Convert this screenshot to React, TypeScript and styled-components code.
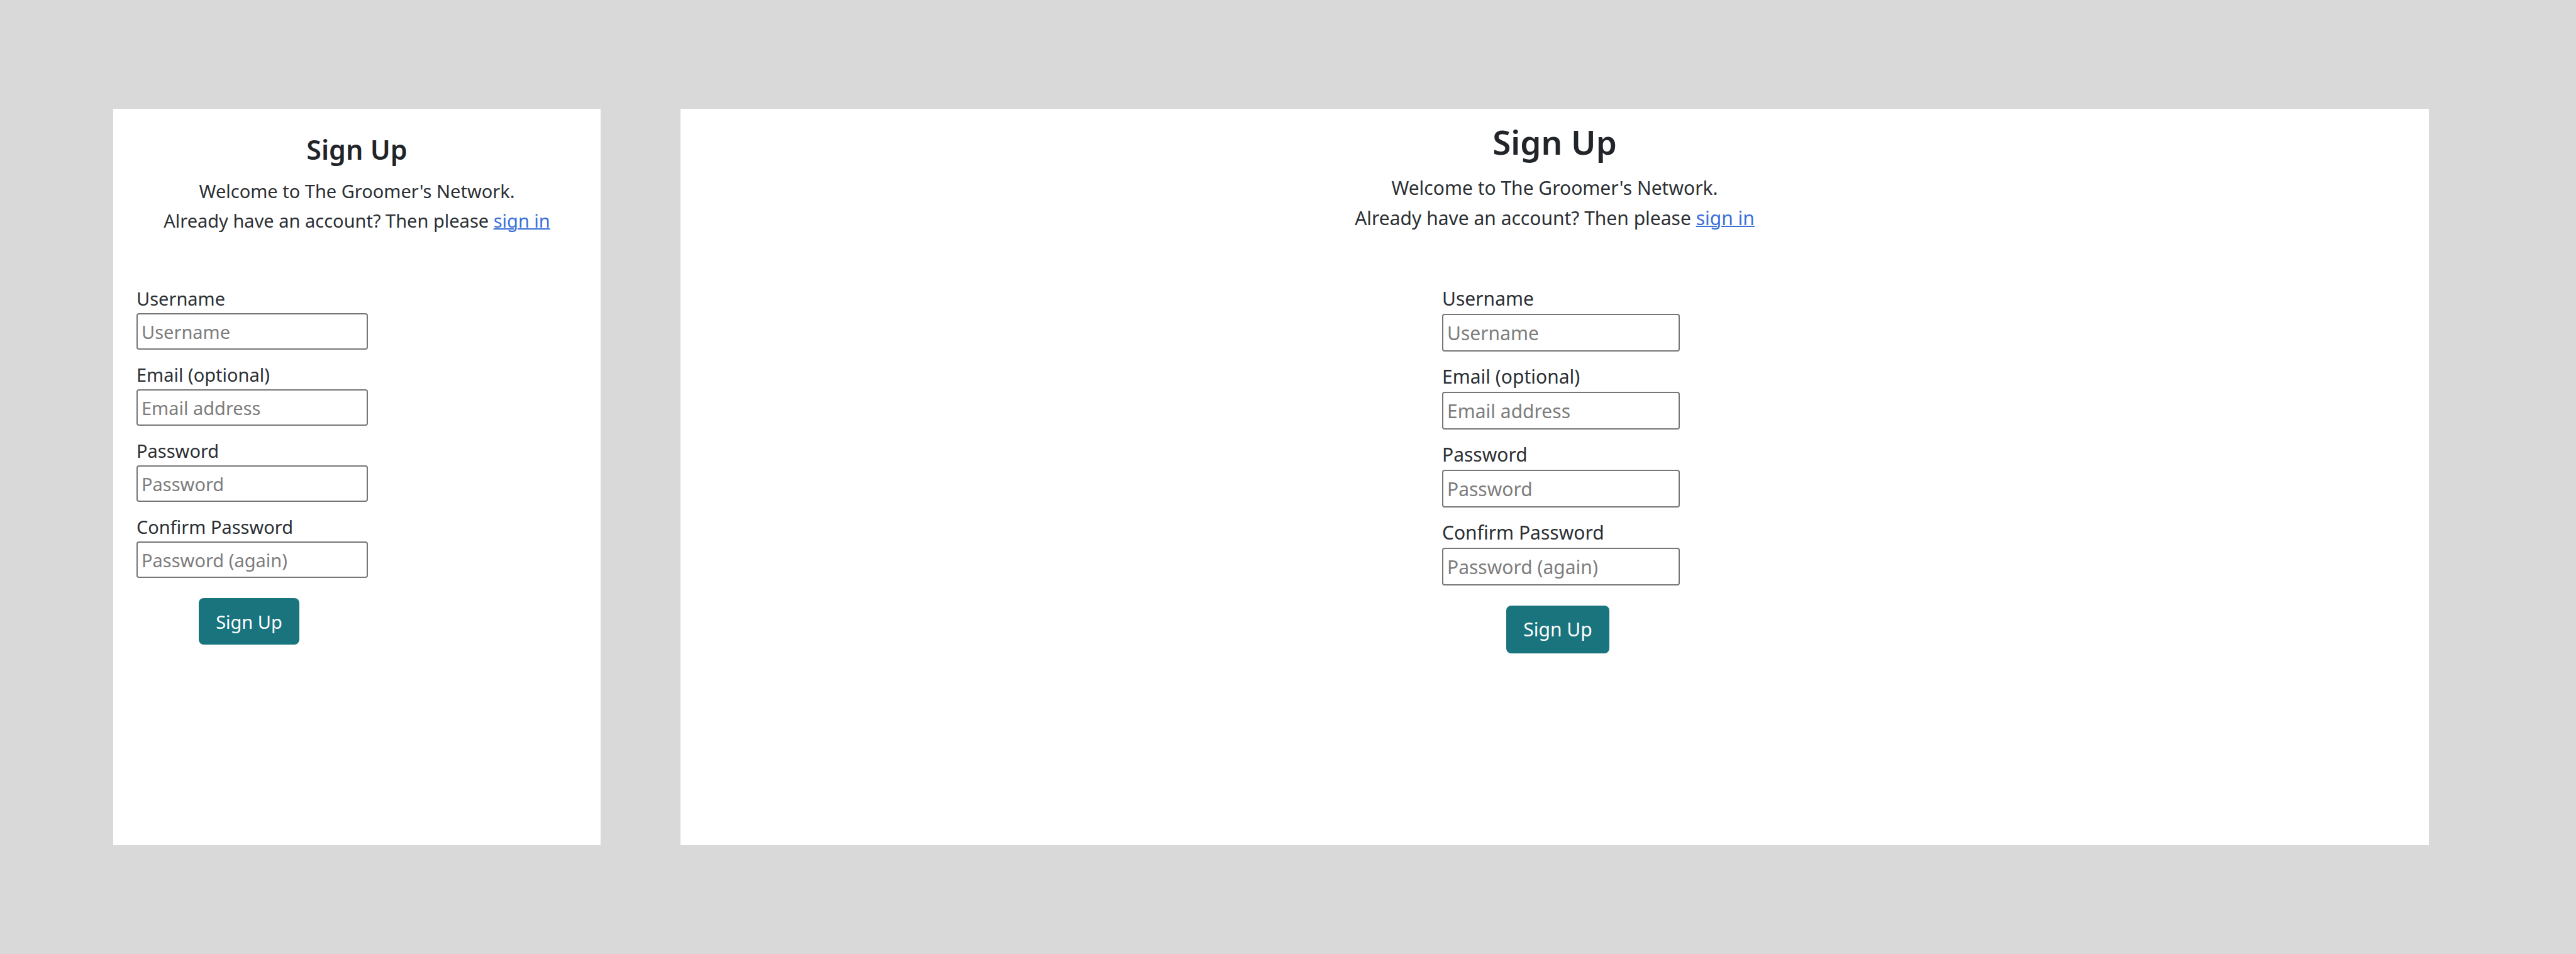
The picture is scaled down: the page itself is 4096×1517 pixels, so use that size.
import React, { useId } from "react";
import styled, { createGlobalStyle, css } from "styled-components";

const GlobalStyle = createGlobalStyle`
  *, *::before, *::after { box-sizing: border-box; }
  body {
    margin: 0;
    background: #d9d9d9;
    color: #2b2f33;
    font-family: "Noto Sans", "Open Sans", sans-serif;
  }
`;

type Size = "mobile" | "desktop";

const Board = styled.main`
  display: grid;
  grid-template-columns: 775fr 2780fr;
  gap: 127px;
  min-height: 100vh;
  padding: 173px 234px 173px 180px;
`;

const Panel = styled.section<{ $size: Size }>`
  background: #fff;
  ${({ $size }) =>
    $size === "mobile"
      ? css`
          padding: 38px 37px;
          font-size: 29px;
          line-height: 47px;
        `
      : css`
          padding: 20px 37px;
          font-size: 30px;
          line-height: 48px;
        `}
`;

const Title = styled.h1<{ $size: Size }>`
  margin: 0 0 16px;
  color: #212529;
  font-size: ${({ $size }) => ($size === "mobile" ? 43 : 53)}px;
  line-height: ${({ $size }) => ($size === "mobile" ? 53 : 66)}px;
  font-weight: 600;
  text-align: center;
`;

const Intro = styled.p<{ $size: Size }>`
  margin: 0 0 ${({ $size }) => ($size === "mobile" ? 77 : 80)}px;
  text-align: center;
`;

const SignInLink = styled.a`
  color: #3a6fd8;
  text-decoration: underline;
  text-decoration-thickness: 2px;
`;

const FormRow = styled.div<{ $size: Size }>`
  display: flex;
  justify-content: ${({ $size }) => ($size === "mobile" ? "flex-start" : "center")};
  padding-left: ${({ $size }) => ($size === "mobile" ? 0 : 20)}px;
`;

const Form = styled.form<{ $size: Size }>`
  display: flex;
  flex-direction: column;
  gap: 16px;
  width: ${({ $size }) => ($size === "mobile" ? 368 : 378)}px;
`;

const Field = styled.div`
  display: flex;
  flex-direction: column;
`;

const Input = styled.input<{ $size: Size }>`
  width: 100%;
  height: ${({ $size }) => ($size === "mobile" ? 58 : 60)}px;
  padding: 0 6px;
  border: 2px solid #767676;
  border-radius: 4px;
  background: #fff;
  color: inherit;
  font: inherit;

  &::placeholder {
    color: #7d7d7d;
    opacity: 1;
  }
`;

const Actions = styled.div`
  display: flex;
  justify-content: center;
  padding: 16px 10px 0 0;
`;

const SubmitButton = styled.button<{ $size: Size }>`
  height: ${({ $size }) => ($size === "mobile" ? 74 : 76)}px;
  padding: 0 27px;
  border: 0;
  border-radius: 8px;
  background: #19747e;
  color: #fff;
  font: inherit;
`;

const fields = [
  { name: "username", label: "Username", placeholder: "Username", type: "text" },
  { name: "email", label: "Email (optional)", placeholder: "Email address", type: "email" },
  { name: "password1", label: "Password", placeholder: "Password", type: "password" },
  { name: "password2", label: "Confirm Password", placeholder: "Password (again)", type: "password" },
];

function SignUp({ size }: { size: Size }) {
  const id = useId();
  return (
    <Panel $size={size}>
      <Title $size={size}>Sign Up</Title>
      <Intro $size={size}>
        Welcome to The Groomer's Network.
        <br />
        Already have an account? Then please <SignInLink href="#signin">sign in</SignInLink>
      </Intro>
      <FormRow $size={size}>
        <Form $size={size} onSubmit={(e) => e.preventDefault()}>
          {fields.map((f) => (
            <Field key={f.name}>
              <label htmlFor={id + f.name}>{f.label}</label>
              <Input $size={size} id={id + f.name} name={f.name} type={f.type} placeholder={f.placeholder} />
            </Field>
          ))}
          <Actions>
            <SubmitButton $size={size} type="submit">Sign Up</SubmitButton>
          </Actions>
        </Form>
      </FormRow>
    </Panel>
  );
}

export default function App() {
  return (
    <>
      <GlobalStyle />
      <Board>
        <SignUp size="mobile" />
        <SignUp size="desktop" />
      </Board>
    </>
  );
}
